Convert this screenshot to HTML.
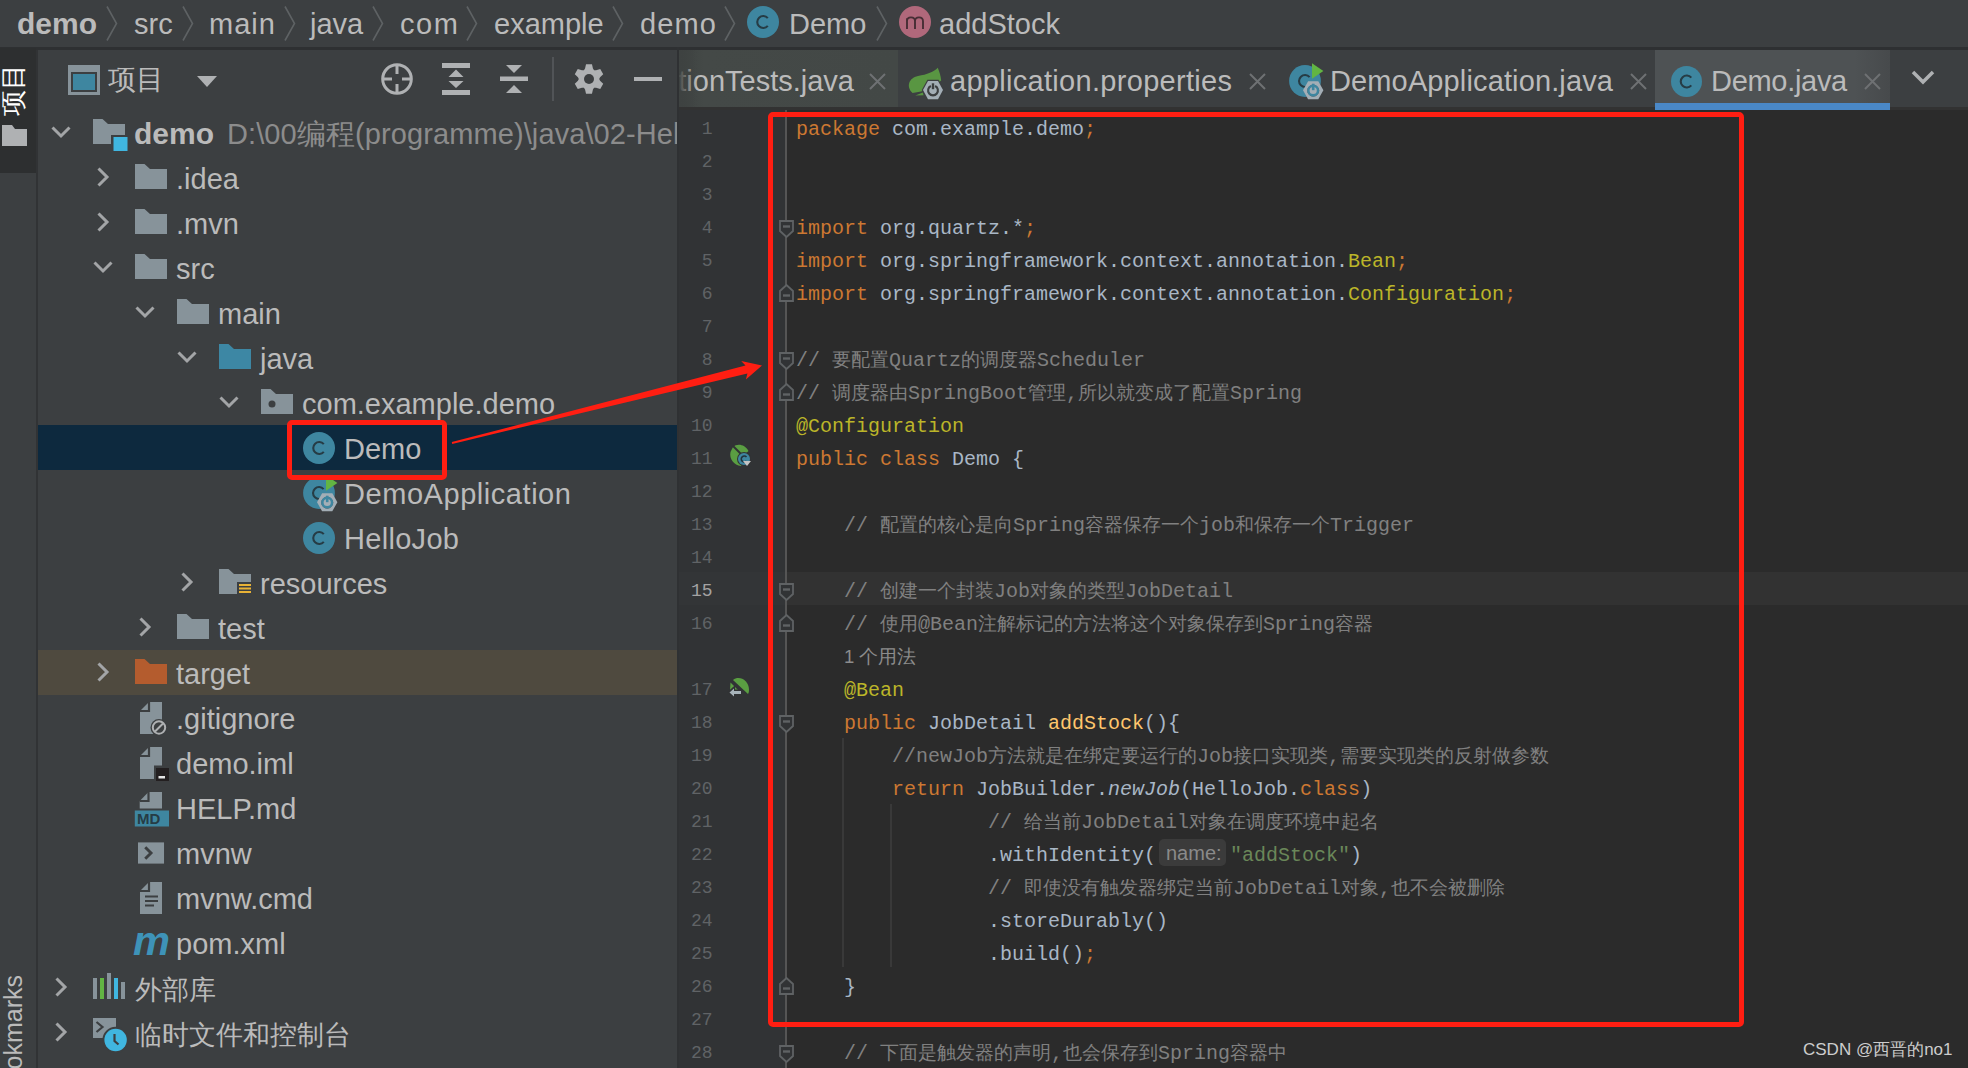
<!DOCTYPE html>
<html><head><meta charset="utf-8"><title>Demo</title>
<style>
*{margin:0;padding:0;box-sizing:border-box}
html,body{width:1968px;height:1068px;overflow:hidden;background:#3C3F41}
body{position:relative;font-family:"Liberation Sans", sans-serif;color:#BBBBBB}
.a{position:absolute}
.t{position:absolute;white-space:pre;font-family:"Liberation Sans", sans-serif;font-size:29px;line-height:34px;color:#BBBBBB}
.c{position:absolute;white-space:pre;font-family:"Liberation Mono", monospace;font-size:20px;line-height:33px;height:33px;color:#A9B7C6}
.z{font-size:19px}
.k{color:#CC7832}
.an{color:#BBB529}
.cm{color:#808080}
.s{color:#6A8759}
.fn{color:#FFC66D}
.it{font-style:italic}
.ln{position:absolute;white-space:pre;font-family:"Liberation Mono", monospace;font-size:18px;line-height:33px;color:#606366;text-align:right;width:60px;left:652.5px}
svg{position:absolute;overflow:visible}
</style></head><body>

<div class="a" style="left:0;top:0;width:1968px;height:47px;background:#3C3F41"></div>
<div class="a" style="left:0;top:47px;width:1968px;height:3px;background:#2E3032"></div>
<div class="t" style="left:17px;top:7px;font-weight:bold;font-size:30px">demo</div>
<svg style="left:106px;top:6px" width="12" height="35" viewBox="0 0 12 35"><path d="M1 0.5 L10.5 17.5 L1 34.5" fill="none" stroke="#5E6264" stroke-width="1.6"/></svg>
<div class="t" style="left:134px;top:7px">src</div>
<svg style="left:182px;top:6px" width="12" height="35" viewBox="0 0 12 35"><path d="M1 0.5 L10.5 17.5 L1 34.5" fill="none" stroke="#5E6264" stroke-width="1.6"/></svg>
<div class="t" style="left:209px;top:7px;letter-spacing:1px">main</div>
<svg style="left:284px;top:6px" width="12" height="35" viewBox="0 0 12 35"><path d="M1 0.5 L10.5 17.5 L1 34.5" fill="none" stroke="#5E6264" stroke-width="1.6"/></svg>
<div class="t" style="left:310px;top:7px">java</div>
<svg style="left:372px;top:6px" width="12" height="35" viewBox="0 0 12 35"><path d="M1 0.5 L10.5 17.5 L1 34.5" fill="none" stroke="#5E6264" stroke-width="1.6"/></svg>
<div class="t" style="left:400px;top:7px;letter-spacing:1.5px">com</div>
<svg style="left:466px;top:6px" width="12" height="35" viewBox="0 0 12 35"><path d="M1 0.5 L10.5 17.5 L1 34.5" fill="none" stroke="#5E6264" stroke-width="1.6"/></svg>
<div class="t" style="left:494px;top:7px">example</div>
<svg style="left:612px;top:6px" width="12" height="35" viewBox="0 0 12 35"><path d="M1 0.5 L10.5 17.5 L1 34.5" fill="none" stroke="#5E6264" stroke-width="1.6"/></svg>
<div class="t" style="left:640px;top:7px;letter-spacing:1.1px">demo</div>
<svg style="left:724px;top:6px" width="12" height="35" viewBox="0 0 12 35"><path d="M1 0.5 L10.5 17.5 L1 34.5" fill="none" stroke="#5E6264" stroke-width="1.6"/></svg>
<svg style="left:747px;top:5.800000000000001px" width="32" height="32" viewBox="0 0 32 32"><circle cx="16" cy="16" r="16" fill="#3E86A0"/><path d="M20.80 12.10 A6 6 0 1 0 20.80 19.90" fill="none" stroke="#263C45" stroke-width="2.1"/></svg>
<div class="t" style="left:789px;top:7px">Demo</div>
<svg style="left:876px;top:6px" width="12" height="35" viewBox="0 0 12 35"><path d="M1 0.5 L10.5 17.5 L1 34.5" fill="none" stroke="#5E6264" stroke-width="1.6"/></svg>
<svg style="left:899px;top:5.9px" width="32" height="32" viewBox="0 0 32 32"><circle cx="16" cy="16" r="16" fill="#B0687B"/><path d="M8 23 V12.2 M8 15.2 Q8 11.4 12 11.4 Q16 11.4 16 15.2 V23 M16 15.2 Q16 11.4 20 11.4 Q24 11.4 24 15.2 V23" fill="none" stroke="#472E35" stroke-width="1.9"/></svg>
<div class="t" style="left:939px;top:7px">addStock</div>
<div class="a" style="left:0;top:50px;width:36px;height:1018px;background:#3C3F41"></div>
<div class="a" style="left:0;top:48px;width:36px;height:125px;background:#2D2F30"></div>
<div class="a" style="left:36px;top:50px;width:2px;height:1018px;background:#313335"></div>
<div class="a" style="left:-13px;top:75.5px;width:52px;height:27px;transform:rotate(-90deg);font-size:26px;line-height:27px;color:#FFFFFF;white-space:pre;text-align:center">项目</div>
<svg style="left:2px;top:125px" width="25" height="21" viewBox="0 0 25 21"><path d="M0 0 H10 L13 4 H25 V21 H0 Z" fill="#AFB1B3"/></svg>
<div class="a" style="left:-42px;top:1032px;width:110px;height:26px;transform:rotate(-90deg);font-size:25px;line-height:26px;color:#BBBBBB;white-space:pre;text-align:right">Bookmarks</div>
<svg style="left:68px;top:65px" width="32" height="30" viewBox="0 0 32 30"><rect x="0" y="0" width="32" height="30" fill="#87939A"/><rect x="3" y="7" width="26" height="20" fill="#3C3F41"/><rect x="5" y="9" width="22" height="16" fill="#3E86A0"/></svg>
<div class="t" style="left:108px;top:63px;font-size:28px">项目</div>
<svg style="left:197px;top:76px" width="20" height="11" viewBox="0 0 20 11"><path d="M0 0 H20 L10 11 Z" fill="#AFB1B3"/></svg>
<svg style="left:381px;top:63px" width="32" height="32" viewBox="0 0 32 32"><circle cx="16" cy="16" r="14.3" fill="none" stroke="#AFB1B3" stroke-width="3"/><path d="M16 2 V11 M16 21 V30 M2 16 H11 M21 16 H30" stroke="#AFB1B3" stroke-width="3"/></svg>
<svg style="left:442px;top:63px" width="28" height="32" viewBox="0 0 28 32"><rect x="0" y="0" width="28" height="5" fill="#AFB1B3"/><rect x="0" y="27" width="28" height="5" fill="#AFB1B3"/><path d="M6.5 14 L14 6.5 L21.5 14 Z M6.5 18 L14 25 L21.5 18 Z" fill="#AFB1B3"/></svg>
<svg style="left:500px;top:65px" width="28" height="28" viewBox="0 0 28 28"><rect x="0" y="11.5" width="28" height="4.5" fill="#AFB1B3"/><path d="M6 0 H22 L14 8 Z M6 28 H22 L14 20 Z" fill="#AFB1B3"/></svg>
<div class="a" style="left:552px;top:57px;width:2px;height:44px;background:#515457"></div>
<svg style="left:574px;top:64px" width="30" height="30" viewBox="0 0 30 30"><polygon points="11.05,4.52 12.02,0.30 17.98,0.30 18.95,4.52 20.10,6.17 22.10,6.34 26.24,5.07 29.22,10.23 26.05,13.18 25.20,15.00 26.05,16.82 29.22,19.77 26.24,24.93 22.10,23.66 20.10,23.83 18.95,25.48 17.98,29.70 12.02,29.70 11.05,25.48 9.90,23.83 7.90,23.66 3.76,24.93 0.78,19.77 3.95,16.82 4.80,15.00 3.95,13.18 0.78,10.23 3.76,5.07 7.90,6.34 9.90,6.17" fill="#AFB1B3"/><circle cx="15" cy="15" r="5" fill="#3C3F41"/></svg>
<div class="a" style="left:634px;top:76.5px;width:28px;height:4.5px;background:#AFB1B3"></div>
<div class="a" style="left:38px;top:425px;width:639px;height:45px;background:#0D293E"></div>
<div class="a" style="left:38px;top:650px;width:639px;height:45px;background:#4F4A3F"></div>
<svg style="left:51px;top:126px" width="20" height="12" viewBox="0 0 20 12"><path d="M1.5 1.5 L10 10 L18.5 1.5" fill="none" stroke="#A3A5A7" stroke-width="3"/></svg>
<svg style="left:93px;top:119px" width="35" height="33" viewBox="0 0 35 33"><path d="M0 0 H9.5 L15 5 H32 V25 H0 Z" fill="#87939A"/><rect x="18" y="16" width="17" height="17" fill="#3C3F41"/><rect x="20.5" y="18" width="14" height="14" fill="#40B6E0"/></svg>
<div class="t" style="left:134px;top:117px;"><b style="font-size:30px">demo</b></div>
<div class="t" style="left:227px;top:117px;color:#8C8C8C;width:450px;overflow:hidden;letter-spacing:0.1px">D:\00编程(programme)\java\02-Hello</div>
<svg style="left:97px;top:167px" width="12" height="20" viewBox="0 0 12 20"><path d="M1.5 1.5 L10 10 L1.5 18.5" fill="none" stroke="#A3A5A7" stroke-width="3"/></svg>
<svg style="left:135px;top:164px" width="32" height="25" viewBox="0 0 32 25"><path d="M0 0 H9.5 L15 5 H32 V25 H0 Z" fill="#87939A"/></svg>
<div class="t" style="left:176px;top:162px;">.idea</div>
<svg style="left:97px;top:212px" width="12" height="20" viewBox="0 0 12 20"><path d="M1.5 1.5 L10 10 L1.5 18.5" fill="none" stroke="#A3A5A7" stroke-width="3"/></svg>
<svg style="left:135px;top:209px" width="32" height="25" viewBox="0 0 32 25"><path d="M0 0 H9.5 L15 5 H32 V25 H0 Z" fill="#87939A"/></svg>
<div class="t" style="left:176px;top:207px;">.mvn</div>
<svg style="left:93px;top:261px" width="20" height="12" viewBox="0 0 20 12"><path d="M1.5 1.5 L10 10 L18.5 1.5" fill="none" stroke="#A3A5A7" stroke-width="3"/></svg>
<svg style="left:135px;top:254px" width="32" height="25" viewBox="0 0 32 25"><path d="M0 0 H9.5 L15 5 H32 V25 H0 Z" fill="#87939A"/></svg>
<div class="t" style="left:176px;top:252px;">src</div>
<svg style="left:135px;top:306px" width="20" height="12" viewBox="0 0 20 12"><path d="M1.5 1.5 L10 10 L18.5 1.5" fill="none" stroke="#A3A5A7" stroke-width="3"/></svg>
<svg style="left:177px;top:299px" width="32" height="25" viewBox="0 0 32 25"><path d="M0 0 H9.5 L15 5 H32 V25 H0 Z" fill="#87939A"/></svg>
<div class="t" style="left:218px;top:297px;">main</div>
<svg style="left:177px;top:351px" width="20" height="12" viewBox="0 0 20 12"><path d="M1.5 1.5 L10 10 L18.5 1.5" fill="none" stroke="#A3A5A7" stroke-width="3"/></svg>
<svg style="left:219px;top:344px" width="32" height="25" viewBox="0 0 32 25"><path d="M0 0 H9.5 L15 5 H32 V25 H0 Z" fill="#3D87A4"/></svg>
<div class="t" style="left:260px;top:342px;">java</div>
<svg style="left:219px;top:396px" width="20" height="12" viewBox="0 0 20 12"><path d="M1.5 1.5 L10 10 L18.5 1.5" fill="none" stroke="#A3A5A7" stroke-width="3"/></svg>
<svg style="left:261px;top:389px" width="32" height="25" viewBox="0 0 32 25"><path d="M0 0 H9.5 L15 5 H32 V25 H0 Z" fill="#87939A"/><circle cx="11" cy="15" r="3.5" fill="#3C3F41"/></svg>
<div class="t" style="left:302px;top:387px;">com.example.demo</div>
<svg style="left:303px;top:432px" width="32" height="32" viewBox="0 0 32 32"><circle cx="16" cy="16" r="16" fill="#3E86A0"/><path d="M20.80 12.10 A6 6 0 1 0 20.80 19.90" fill="none" stroke="#263C45" stroke-width="2.1"/></svg>
<div class="t" style="left:344px;top:432px;">Demo</div>
<svg style="left:299px;top:473px" width="40" height="40" viewBox="0 0 40 40"><circle cx="20" cy="20" r="15.9" fill="#3E86A0"/><path d="M24.6 16.1 A6 6 0 1 0 24.6 23.9" fill="none" stroke="#263C45" stroke-width="2.1"/><path d="M27 2.1999999999999993 L38.4 10.1 L27 17.7 Z" fill="#62B543"/><polygon points="18.0,29.2 23.1,20.2 33.3,20.2 38.4,29.2 33.3,38.2 23.1,38.2" fill="#A3AEB6"/><circle cx="28.2" cy="29.7" r="5.6" fill="none" stroke="#22343C" stroke-width="1" opacity="0.6"/><circle cx="28.2" cy="29.5" r="4.8" fill="none" stroke="#3E86A0" stroke-width="2.4"/><path d="M28.2 22.7 V29.2" stroke="#3E86A0" stroke-width="2.6"/></svg>
<div class="t" style="left:344px;top:477px;letter-spacing:0.55px">DemoApplication</div>
<svg style="left:303px;top:522px" width="32" height="32" viewBox="0 0 32 32"><circle cx="16" cy="16" r="16" fill="#3E86A0"/><path d="M20.80 12.10 A6 6 0 1 0 20.80 19.90" fill="none" stroke="#263C45" stroke-width="2.1"/></svg>
<div class="t" style="left:344px;top:522px;letter-spacing:0.3px">HelloJob</div>
<svg style="left:181px;top:572px" width="12" height="20" viewBox="0 0 12 20"><path d="M1.5 1.5 L10 10 L1.5 18.5" fill="none" stroke="#A3A5A7" stroke-width="3"/></svg>
<svg style="left:219px;top:569px" width="32" height="25" viewBox="0 0 32 25"><path d="M0 0 H9.5 L15 5 H32 V25 H0 Z" fill="#87939A"/><rect x="18" y="13" width="14" height="12" fill="#3C3F41"/><path d="M20 16 H32 M20 19.5 H32 M20 23 H32" stroke="#E8B236" stroke-width="2"/></svg>
<div class="t" style="left:260px;top:567px;">resources</div>
<svg style="left:139px;top:617px" width="12" height="20" viewBox="0 0 12 20"><path d="M1.5 1.5 L10 10 L1.5 18.5" fill="none" stroke="#A3A5A7" stroke-width="3"/></svg>
<svg style="left:177px;top:614px" width="32" height="25" viewBox="0 0 32 25"><path d="M0 0 H9.5 L15 5 H32 V25 H0 Z" fill="#87939A"/></svg>
<div class="t" style="left:218px;top:612px;">test</div>
<svg style="left:97px;top:662px" width="12" height="20" viewBox="0 0 12 20"><path d="M1.5 1.5 L10 10 L1.5 18.5" fill="none" stroke="#A3A5A7" stroke-width="3"/></svg>
<svg style="left:135px;top:659px" width="32" height="25" viewBox="0 0 32 25"><path d="M0 0 H9.5 L15 5 H32 V25 H0 Z" fill="#B45C2E"/></svg>
<div class="t" style="left:176px;top:657px;">target</div>
<svg style="left:140px;top:702px" width="30" height="34" viewBox="0 0 30 34"><path d="M0 9 L9 0 H22 V32 H0 Z" fill="#87939A"/><path d="M0 9 H9 V0" fill="none" stroke="#3C3F41" stroke-width="2.2"/><circle cx="19" cy="25.5" r="8.5" fill="#3C3F41"/><circle cx="19" cy="25.5" r="6.2" fill="none" stroke="#AFB1B3" stroke-width="2"/><path d="M15 29.5 L23 21.5" stroke="#AFB1B3" stroke-width="2"/></svg>
<div class="t" style="left:176px;top:702px;">.gitignore</div>
<svg style="left:140px;top:747px" width="30" height="34" viewBox="0 0 30 34"><path d="M0 9 L9 0 H22 V32 H0 Z" fill="#87939A"/><path d="M0 9 H9 V0" fill="none" stroke="#3C3F41" stroke-width="2.2"/><rect x="14" y="18.5" width="17" height="16" fill="#3C3F41"/><rect x="16" y="21" width="13" height="13" fill="#231F20"/><rect x="18.5" y="29" width="6.5" height="2.5" fill="#E5E5E5"/></svg>
<div class="t" style="left:176px;top:747px;">demo.iml</div>
<svg style="left:134px;top:791.5px" width="36" height="36" viewBox="0 0 36 36"><path d="M5.7 9 L14.5 0 H28 V16.5 H5.7 Z" fill="#87939A"/><path d="M5.7 9 H14.5 V0" fill="none" stroke="#3C3F41" stroke-width="2.2"/><rect x="0.8" y="18.5" width="34.2" height="16" fill="#3E86A0"/><text x="3" y="32" font-family="Liberation Sans" font-weight="bold" font-size="15" fill="#263C45">MD</text></svg>
<div class="t" style="left:176px;top:792px;">HELP.md</div>
<svg style="left:137.5px;top:841.5px" width="27" height="22" viewBox="0 0 28 22"><rect x="0" y="0" width="27" height="22" fill="#87939A"/><path d="M7.5 5 L13.5 11 L7.5 17" fill="none" stroke="#3C3F41" stroke-width="3"/></svg>
<div class="t" style="left:176px;top:837px;">mvnw</div>
<svg style="left:140px;top:882px" width="30" height="34" viewBox="0 0 30 34"><path d="M0 9 L9 0 H22 V32 H0 Z" fill="#87939A"/><path d="M0 9 H9 V0" fill="none" stroke="#3C3F41" stroke-width="2.2"/><path d="M5 14.5 H18 M5 19 H18 M5 23.5 H14" stroke="#3C3F41" stroke-width="2"/></svg>
<div class="t" style="left:176px;top:882px;">mvnw.cmd</div>
<div class="a" style="left:133px;top:921px;font-family:'Liberation Sans',sans-serif;font-style:italic;font-weight:bold;font-size:40px;transform:scaleX(1.04);transform-origin:left;line-height:40px;color:#3E93B8">m</div>
<div class="t" style="left:176px;top:927px;">pom.xml</div>
<svg style="left:55px;top:977px" width="12" height="20" viewBox="0 0 12 20"><path d="M1.5 1.5 L10 10 L1.5 18.5" fill="none" stroke="#A3A5A7" stroke-width="3"/></svg>
<svg style="left:93px;top:973px" width="32" height="26" viewBox="0 0 32 26"><rect x="0" y="5" width="4" height="21" fill="#87939A"/><rect x="7" y="5" width="4" height="21" fill="#62B543"/><rect x="14" y="0" width="4" height="26" fill="#87939A"/><rect x="21" y="5" width="4" height="21" fill="#40B6E0"/><rect x="28" y="9" width="4" height="17" fill="#87939A"/></svg>
<div class="t" style="left:135px;top:972px;font-size:27.4px;top:973px">外部库</div>
<svg style="left:55px;top:1022px" width="12" height="20" viewBox="0 0 12 20"><path d="M1.5 1.5 L10 10 L1.5 18.5" fill="none" stroke="#A3A5A7" stroke-width="3"/></svg>
<svg style="left:93px;top:1017.5px" width="35" height="35" viewBox="0 0 35 35"><rect x="0" y="0" width="23" height="20" fill="#87939A"/><path d="M3.5 4 L9.5 9 L3.5 14" fill="none" stroke="#3C3F41" stroke-width="2.2"/><circle cx="22.6" cy="22" r="13.2" fill="#3C3F41"/><circle cx="22.6" cy="22" r="11.2" fill="#40B6E0"/><path d="M21.5 16 V23 L25.5 26.5" fill="none" stroke="#3C3F41" stroke-width="2.2"/></svg>
<div class="t" style="left:135px;top:1017px;font-size:27.4px;top:1018px">临时文件和控制台</div>
<div class="a" style="left:677px;top:50px;width:1291px;height:57px;background:#3C3F41"></div>
<div class="a" style="left:677px;top:107px;width:1291px;height:3px;background:#323232"></div>
<div class="a" style="left:679px;top:50px;width:219px;height:57px;background:linear-gradient(90deg,#3E4241 0px,#444947 25px,#434846 100%)"></div>
<div class="a" style="left:679px;top:50px;width:180px;height:57px;overflow:hidden"><div class="t" style="right:5px;top:14px">DemoApplicationTests.java</div></div>
<div class="a" style="left:679px;top:50px;width:18px;height:57px;background:linear-gradient(90deg,rgba(62,66,65,0.95),rgba(67,72,70,0))"></div>
<svg style="left:869px;top:73px" width="17" height="17" viewBox="0 0 17 17"><path d="M1 1 L16 16 M16 1 L1 16" stroke="#6E7173" stroke-width="2"/></svg>
<svg style="left:903px;top:62px" width="45" height="45" viewBox="0 0 45 45"><path d="M9.6 31 C3 25 5.5 16 15 14 C24 12.5 31 10 34.8 5.8 C36.5 10 37.8 14 38.2 18.5 L28 26 L18 29.5 Z" fill="#599642"/><path d="M12.3 33.6 L19.8 30.5 L20.6 33.2 Z" fill="#599642"/><polygon points="20,28.1 25,18.9 35,18.9 40,28.1 35,37.3 25,37.3" fill="#A3AEB6" stroke="#3C3F41" stroke-width="2.2" paint-order="stroke"/><path d="M27.9 24 A4.9 4.9 0 1 0 32.1 24" fill="none" stroke="#3C3F41" stroke-width="2.1"/><path d="M30 21.3 V27.2" stroke="#3C3F41" stroke-width="2.4"/></svg>
<div class="t" style="left:950px;top:64px;letter-spacing:0.3px">application.properties</div>
<svg style="left:1249px;top:73px" width="17" height="17" viewBox="0 0 17 17"><path d="M1 1 L16 16 M16 1 L1 16" stroke="#6E7173" stroke-width="2"/></svg>
<svg style="left:1285px;top:61px" width="40" height="40" viewBox="0 0 40 40"><circle cx="20" cy="20" r="15.9" fill="#3E86A0"/><path d="M24.6 16.1 A6 6 0 1 0 24.6 23.9" fill="none" stroke="#263C45" stroke-width="2.1"/><path d="M27 2.1999999999999993 L38.4 10.1 L27 17.7 Z" fill="#62B543"/><polygon points="18.0,29.2 23.1,20.2 33.3,20.2 38.4,29.2 33.3,38.2 23.1,38.2" fill="#A3AEB6"/><circle cx="28.2" cy="29.7" r="5.6" fill="none" stroke="#22343C" stroke-width="1" opacity="0.6"/><circle cx="28.2" cy="29.5" r="4.8" fill="none" stroke="#3E86A0" stroke-width="2.4"/><path d="M28.2 22.7 V29.2" stroke="#3E86A0" stroke-width="2.6"/></svg>
<div class="t" style="left:1330px;top:64px;letter-spacing:0.13px">DemoApplication.java</div>
<svg style="left:1630px;top:73px" width="17" height="17" viewBox="0 0 17 17"><path d="M1 1 L16 16 M16 1 L1 16" stroke="#6E7173" stroke-width="2"/></svg>
<div class="a" style="left:1655px;top:50px;width:235px;height:57px;background:linear-gradient(90deg,#4E5254 0,#4E5254 85%,#474A4C 100%)"></div>
<div class="a" style="left:1655px;top:103px;width:235px;height:8px;background:#4A88C7"></div>
<svg style="left:1670.5px;top:65.5px" width="31.0" height="31.0" viewBox="0 0 31.0 31.0"><circle cx="15.5" cy="15.5" r="15.5" fill="#3E86A0"/><path d="M20.30 11.60 A6 6 0 1 0 20.30 19.40" fill="none" stroke="#263C45" stroke-width="2.1"/></svg>
<div class="t" style="left:1711px;top:64px;letter-spacing:-0.3px">Demo.java</div>
<svg style="left:1864px;top:73px" width="17" height="17" viewBox="0 0 17 17"><path d="M1 1 L16 16 M16 1 L1 16" stroke="#6E7173" stroke-width="2"/></svg>
<svg style="left:1911px;top:70px" width="24" height="15" viewBox="0 0 24 15"><path d="M2 2 L12 12 L22 2" fill="none" stroke="#AFB1B3" stroke-width="3.5"/></svg>
<div class="a" style="left:677px;top:110px;width:110px;height:958px;background:#313335"></div>
<div class="a" style="left:787px;top:110px;width:1181px;height:958px;background:#2B2B2B"></div>
<div class="a" style="left:677px;top:572px;width:110px;height:33px;background:#333537"></div>
<div class="a" style="left:787px;top:572px;width:1181px;height:33px;background:#323232"></div>
<div class="a" style="left:785px;top:110px;width:2px;height:958px;background:#555555"></div>
<div class="a" style="left:842px;top:738px;width:2px;height:229px;background:#393939"></div>
<div class="a" style="left:890px;top:804px;width:2px;height:163px;background:#393939"></div>
<div class="ln" style="top:113px">1</div>
<div class="ln" style="top:146px">2</div>
<div class="ln" style="top:179px">3</div>
<div class="ln" style="top:212px">4</div>
<div class="ln" style="top:245px">5</div>
<div class="ln" style="top:278px">6</div>
<div class="ln" style="top:311px">7</div>
<div class="ln" style="top:344px">8</div>
<div class="ln" style="top:377px">9</div>
<div class="ln" style="top:410px">10</div>
<div class="ln" style="top:443px">11</div>
<div class="ln" style="top:476px">12</div>
<div class="ln" style="top:509px">13</div>
<div class="ln" style="top:542px">14</div>
<div class="ln" style="top:575px;color:#A4A3A3">15</div>
<div class="ln" style="top:608px">16</div>
<div class="ln" style="top:674px">17</div>
<div class="ln" style="top:707px">18</div>
<div class="ln" style="top:740px">19</div>
<div class="ln" style="top:773px">20</div>
<div class="ln" style="top:806px">21</div>
<div class="ln" style="top:839px">22</div>
<div class="ln" style="top:872px">23</div>
<div class="ln" style="top:905px">24</div>
<div class="ln" style="top:938px">25</div>
<div class="ln" style="top:971px">26</div>
<div class="ln" style="top:1004px">27</div>
<div class="ln" style="top:1037px">28</div>
<svg style="left:779px;top:220px" width="15" height="18" viewBox="0 0 15 18"><path d="M1 1 H14 V11 L7.5 17 L1 11 Z" fill="#313335" stroke="#5F6264" stroke-width="1.8"/><path d="M4 6.5 H11" stroke="#5F6264" stroke-width="2.4"/></svg>
<svg style="left:779px;top:284px" width="15" height="18" viewBox="0 0 15 18"><path d="M1 17 H14 V7 L7.5 1 L1 7 Z" fill="#313335" stroke="#5F6264" stroke-width="1.8"/><path d="M4 11.5 H11" stroke="#5F6264" stroke-width="2.4"/></svg>
<svg style="left:779px;top:352px" width="15" height="18" viewBox="0 0 15 18"><path d="M1 1 H14 V11 L7.5 17 L1 11 Z" fill="#313335" stroke="#5F6264" stroke-width="1.8"/><path d="M4 6.5 H11" stroke="#5F6264" stroke-width="2.4"/></svg>
<svg style="left:779px;top:383px" width="15" height="18" viewBox="0 0 15 18"><path d="M1 17 H14 V7 L7.5 1 L1 7 Z" fill="#313335" stroke="#5F6264" stroke-width="1.8"/><path d="M4 11.5 H11" stroke="#5F6264" stroke-width="2.4"/></svg>
<svg style="left:779px;top:583px" width="15" height="18" viewBox="0 0 15 18"><path d="M1 1 H14 V11 L7.5 17 L1 11 Z" fill="#313335" stroke="#5F6264" stroke-width="1.8"/><path d="M4 6.5 H11" stroke="#5F6264" stroke-width="2.4"/></svg>
<svg style="left:779px;top:614px" width="15" height="18" viewBox="0 0 15 18"><path d="M1 17 H14 V7 L7.5 1 L1 7 Z" fill="#313335" stroke="#5F6264" stroke-width="1.8"/><path d="M4 11.5 H11" stroke="#5F6264" stroke-width="2.4"/></svg>
<svg style="left:779px;top:715px" width="15" height="18" viewBox="0 0 15 18"><path d="M1 1 H14 V11 L7.5 17 L1 11 Z" fill="#313335" stroke="#5F6264" stroke-width="1.8"/><path d="M4 6.5 H11" stroke="#5F6264" stroke-width="2.4"/></svg>
<svg style="left:779px;top:977px" width="15" height="18" viewBox="0 0 15 18"><path d="M1 17 H14 V7 L7.5 1 L1 7 Z" fill="#313335" stroke="#5F6264" stroke-width="1.8"/><path d="M4 11.5 H11" stroke="#5F6264" stroke-width="2.4"/></svg>
<svg style="left:779px;top:1045px" width="15" height="18" viewBox="0 0 15 18"><path d="M1 1 H14 V11 L7.5 17 L1 11 Z" fill="#313335" stroke="#5F6264" stroke-width="1.8"/><path d="M4 6.5 H11" stroke="#5F6264" stroke-width="2.4"/></svg>
<div class="c" style="left:796px;top:113px"><span class="k">package</span> com.example.demo<span class="k">;</span></div>
<div class="c" style="left:796px;top:212px"><span class="k">import</span> org.quartz.*<span class="k">;</span></div>
<div class="c" style="left:796px;top:245px"><span class="k">import</span> org.springframework.context.annotation.<span class="an">Bean</span><span class="k">;</span></div>
<div class="c" style="left:796px;top:278px"><span class="k">import</span> org.springframework.context.annotation.<span class="an">Configuration</span><span class="k">;</span></div>
<div class="c" style="left:796px;top:344px"><span class="cm">// <span class="z">要配置</span>Quartz<span class="z">的调度器</span>Scheduler</span></div>
<div class="c" style="left:796px;top:377px"><span class="cm">// <span class="z">调度器由</span>SpringBoot<span class="z">管理</span>,<span class="z">所以就变成了配置</span>Spring</span></div>
<div class="c" style="left:796px;top:410px"><span class="an">@Configuration</span></div>
<div class="c" style="left:796px;top:443px"><span class="k">public class</span> Demo {</div>
<div class="c" style="left:796px;top:509px">    <span class="cm">// <span class="z">配置的核心是向</span>Spring<span class="z">容器保存一个</span>job<span class="z">和保存一个</span>Trigger</span></div>
<div class="c" style="left:796px;top:575px">    <span class="cm">// <span class="z">创建一个封装</span>Job<span class="z">对象的类型</span>JobDetail</span></div>
<div class="c" style="left:796px;top:608px">    <span class="cm">// <span class="z">使用</span>@Bean<span class="z">注解标记的方法将这个对象保存到</span>Spring<span class="z">容器</span></span></div>
<div class="t" style="left:844px;top:645px;font-size:18.5px;line-height:24px;color:#8C8C8C">1 个用法</div>
<div class="c" style="left:796px;top:674px">    <span class="an">@Bean</span></div>
<div class="c" style="left:796px;top:707px">    <span class="k">public</span> JobDetail <span class="fn">addStock</span>(){</div>
<div class="c" style="left:796px;top:740px">        <span class="cm">//newJob<span class="z">方法就是在绑定要运行的</span>Job<span class="z">接口实现类</span>,<span class="z">需要实现类的反射做参数</span></span></div>
<div class="c" style="left:796px;top:773px">        <span class="k">return</span> JobBuilder.<span class="it">newJob</span>(HelloJob.<span class="k">class</span>)</div>
<div class="c" style="left:796px;top:806px">                <span class="cm">// <span class="z">给当前</span>JobDetail<span class="z">对象在调度环境中起名</span></span></div>
<div class="c" style="left:796px;top:839px">                .withIdentity(</div>
<div class="a" style="left:1159px;top:839px;width:67px;height:27px;background:#3B3B3B;border-radius:5px"></div>
<div class="t" style="left:1166px;top:840px;font-size:20px;line-height:26px;color:#8A8A8A">name:</div>
<div class="c" style="left:1230px;top:839px"><span class="s">"addStock"</span>)</div>
<div class="c" style="left:796px;top:872px">                <span class="cm">// <span class="z">即使没有触发器绑定当前</span>JobDetail<span class="z">对象</span>,<span class="z">也不会被删除</span></span></div>
<div class="c" style="left:796px;top:905px">                .storeDurably()</div>
<div class="c" style="left:796px;top:938px">                .build()<span class="k">;</span></div>
<div class="c" style="left:796px;top:971px">    }</div>
<div class="c" style="left:796px;top:1037px">    <span class="cm">// <span class="z">下面是触发器的声明</span>,<span class="z">也会保存到</span>Spring<span class="z">容器中</span></span></div>
<svg style="left:729px;top:444px" width="23" height="23" viewBox="0 0 23 23"><path d="M4 3 C8 -1 16 0 19.5 7 L15 11 L11 15 C13 18 13 21 12 22 C5 21 0 15 1.5 8 Z" fill="#5A9E42"/><path d="M4 2 L12 10" stroke="#313335" stroke-width="2"/><circle cx="15" cy="15" r="7" fill="#313335"/><circle cx="15" cy="15" r="6" fill="#3E86A0"/><path d="M17.5 13 A3 3 0 1 0 17.5 17" fill="none" stroke="#22343C" stroke-width="1.6"/><path d="M14 17 H22 L18 22 Z" fill="#C4C4C4"/></svg>
<svg style="left:729px;top:677px" width="21" height="21" viewBox="0 0 21 21"><path d="M4 3 C10 -2 20 3 20 13 C20 15 19.5 16 19 17 L4 3 Z" fill="#5A9E42"/><path d="M1.5 5.5 L9 13 L1 13 Z" fill="#5A9E42"/><path d="M0 15 L5 10.5 V13.5 H12 V17 H5 V19.5 Z" fill="#313335" stroke="#313335" stroke-width="2"/><path d="M0.5 15.5 L5 11.5 V14 H12 V17 H5 V19.5 Z" fill="#A7B3BA"/></svg>
<div class="a" style="left:677px;top:47px;width:2px;height:1021px;background:#2F3133"></div>
<div class="a" style="left:768px;top:112px;width:976px;height:915px;border:5.3px solid #FF1E12;border-radius:5px"></div>
<div class="a" style="left:287px;top:420px;width:160px;height:60px;border:5.3px solid #FF1E12;border-radius:5px"></div>
<svg style="left:0;top:0" width="1968" height="1068" viewBox="0 0 1968 1068"><polygon points="451.8,442.1 745.5,365.6 741.2,360.9 762.0,365.6 745.9,379.5 747.4,373.4 452.2,443.9" fill="#FF1E12"/></svg>
<div class="t" style="left:1803px;top:1038px;font-size:17px;line-height:24px;color:#CDCDCD">CSDN @西晋的no1</div>
</body></html>
